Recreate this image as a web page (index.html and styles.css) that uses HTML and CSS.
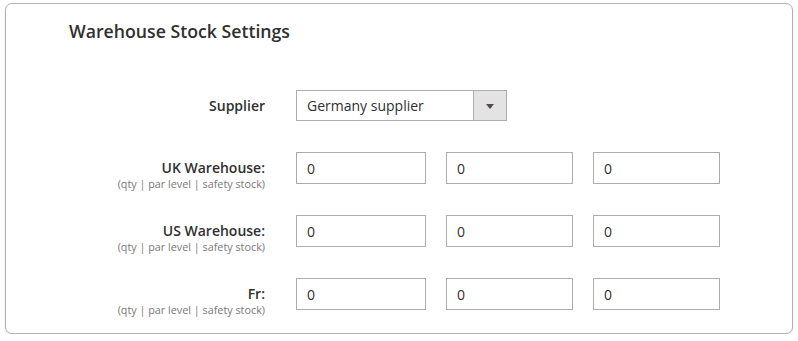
FILE: index.html
```html
<!DOCTYPE html>
<html lang="en">
<head>
  <meta charset="UTF-8">
  <meta name="viewport" content="width=device-width, initial-scale=1.0">
  <title>Warehouse Stock Settings</title>
  <link rel="stylesheet" href="styles.css">
</head>
<body>
  <div class="card">
    <div class="cardTitle">Warehouse Stock Settings</div>

    <div class="formGrid">
      <div class="fieldLabel supplierLabel">Supplier</div>
      <div class="selectBox">
        <select class="selectInput">
          <option>Germany supplier</option>
          <option>UK supplier</option>
        </select>
        <div class="selectArrow"><span class="arrowDown"></span></div>
      </div>

      <div class="fieldLabel">
        <div class="labelMain">UK Warehouse:</div>
        <div class="labelNote">(qty | par level | safety stock)</div>
      </div>
      <div class="stockInputs">
        <input class="stockInput first" type="text" value="0">
        <input class="stockInput" type="text" value="0">
        <input class="stockInput" type="text" value="0">
      </div>

      <div class="fieldLabel">
        <div class="labelMain">US Warehouse:</div>
        <div class="labelNote">(qty | par level | safety stock)</div>
      </div>
      <div class="stockInputs">
        <input class="stockInput first" type="text" value="0">
        <input class="stockInput" type="text" value="0">
        <input class="stockInput" type="text" value="0">
      </div>

      <div class="fieldLabel">
        <div class="labelMain">Fr:</div>
        <div class="labelNote">(qty | par level | safety stock)</div>
      </div>
      <div class="stockInputs">
        <input class="stockInput first" type="text" value="0">
        <input class="stockInput" type="text" value="0">
        <input class="stockInput" type="text" value="0">
      </div>
    </div>
  </div>
</body>
</html>
```

FILE: styles.css
```css
* {
  margin: 0;
  padding: 0;
  box-sizing: border-box;
}

body {
  font-family: "Open Sans", Arial, sans-serif;
  background-color: #ffffff;
  color: #303030;
  padding: 3px 6px 0 5px;
}

.card {
  width: 788px;
  height: 331px;
  border: 1px solid #b3b3b3;
  border-radius: 7px;
  background-color: #ffffff;
  box-shadow: 0 1px 2px rgba(0, 0, 0, 0.12);
}

.cardTitle {
  font-size: 17.7px;
  font-weight: 600;
  line-height: 24px;
  padding: 15px 0 0 63px;
  color: #303030;
}

.formGrid {
  display: grid;
  grid-template-columns: 259px auto;
  grid-template-rows: 31px 32px 32px 32px;
  column-gap: 31px;
  row-gap: 31px;
  margin-top: 47px;
  align-items: start;
}

.fieldLabel {
  text-align: right;
  padding-top: 7px;
}

.supplierLabel {
  font-size: 14px;
  font-weight: 600;
  line-height: 18px;
  padding-top: 7px;
}

.labelMain {
  font-size: 14px;
  font-weight: 600;
  line-height: 18px;
}

.labelNote {
  font-size: 10.8px;
  line-height: 14px;
  color: #7a7a7a;
}

.selectBox {
  display: flex;
  width: 211px;
  height: 31px;
  border: 1px solid #adadad;
}

.selectInput {
  flex: 1;
  appearance: none;
  -webkit-appearance: none;
  border: none;
  background: #ffffff;
  font-family: "Open Sans", Arial, sans-serif;
  font-size: 14px;
  color: #303030;
  padding-left: 10px;
  outline: none;
}

.selectArrow {
  width: 33px;
  background-color: #e3e3e3;
  border-left: 1px solid #adadad;
  display: flex;
  justify-content: center;
  align-items: center;
}

.arrowDown {
  width: 0;
  height: 0;
  border-left: 4px solid transparent;
  border-right: 4px solid transparent;
  border-top: 5px solid #514943;
  margin-top: 1px;
}

.stockInputs {
  display: flex;
  gap: 20px;
}

.stockInput {
  width: 127px;
  height: 32px;
  border: 1px solid #adadad;
  font-family: "Open Sans", Arial, sans-serif;
  font-size: 14px;
  color: #303030;
  padding-left: 10px;
  outline: none;
}

.stockInput.first {
  width: 130px;
}
```
